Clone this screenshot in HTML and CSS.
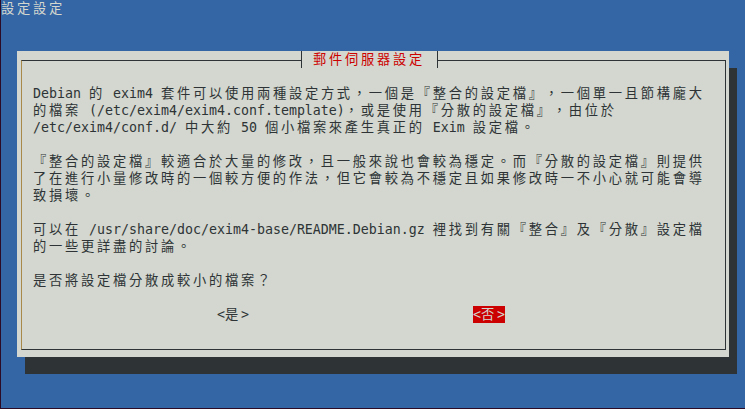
FILE: index.html
```html
<!DOCTYPE html>
<html lang="zh-TW">
<head>
<meta charset="utf-8">
<title>設定設定</title>
<link rel="stylesheet" href="styles.css">
</head>
<body>
<div class="term">
  <div class="backtitle"><span class="w">設定設定</span></div>
  <div class="dialog">
    <div class="top">
      <div class="seg seg-l"></div>
      <svg class="tee" width="8" height="17" viewBox="0 0 8 17"><path d="M0 9.5H4.5M4.5 0V17" stroke="#2e3436" stroke-width="1" fill="none"/></svg>
      <div class="title"> <span class="w">郵件伺服器設定</span> </div>
      <svg class="tee" width="8" height="17" viewBox="0 0 8 17"><path d="M4.5 9.5H8M4.5 0V17" stroke="#2e3436" stroke-width="1" fill="none"/></svg>
      <div class="seg seg-r"></div>
    </div>
    <div class="frame">
      <p class="para">
        <span class="ln">Debian <span class="w">的</span> exim4 <span class="w">套件可以使用兩種設定方式，一個是『整合的設定檔』，一個單一且節構龐大</span></span>
        <span class="ln"><span class="w">的檔案</span> (/etc/exim4/exim4.conf.template)<span class="w">，或是使用『分散的設定檔』，由位於</span></span>
        <span class="ln">/etc/exim4/conf.d/ <span class="w">中大約</span> 50 <span class="w">個小檔案來產生真正的</span> Exim <span class="w">設定檔。</span></span>
      </p>
      <p class="para">
        <span class="ln"><span class="w">『整合的設定檔』較適合於大量的修改，且一般來說也會較為穩定。而『分散的設定檔』則提供</span></span>
        <span class="ln"><span class="w">了在進行小量修改時的一個較方便的作法，但它會較為不穩定且如果修改時一不小心就可能會導</span></span>
        <span class="ln"><span class="w">致損壞。</span></span>
      </p>
      <p class="para">
        <span class="ln"><span class="w">可以在</span> /usr/share/doc/exim4-base/README.Debian.gz <span class="w">裡找到有關『整合』及『分散』設定檔</span></span>
        <span class="ln"><span class="w">的一些更詳盡的討論。</span></span>
      </p>
      <p class="para">
        <span class="ln"><span class="w">是否將設定檔分散成較小的檔案？</span></span>
      </p>
      <div class="btns">
        <span class="btn">&lt;<span class="w">是</span>&gt;</span>
        <span class="btn act">&lt;<span class="w">否</span>&gt;</span>
      </div>
    </div>
  </div>
</div>
</body>
</html>
```
FILE: styles.css
```css
html, body {
  margin: 0;
  padding: 0;
}
body {
  width: 745px;
  height: 409px;
  overflow: hidden;
  background: #3465a4;
}
.term {
  box-sizing: border-box;
  width: 745px;
  height: 409px;
  background: #3465a4;
  border-left: 1px solid #2c0b26;
  border-bottom: 1px solid #2c0b26;
  font-family: "DejaVu Sans Mono", "Noto Sans CJK TC", monospace;
  font-size: 13.29px;
  line-height: 17px;
  color: #2e3436;
  font-kerning: none;
  text-spacing-trim: space-all;
  text-autospace: no-autospace;
}
.w {
  font-family: "Noto Sans CJK TC", sans-serif;
  letter-spacing: 2.71px;
  line-height: 1;
}
.backtitle {
  height: 17px;
  color: #d3d7cf;
  white-space: pre;
}
.dialog {
  box-sizing: border-box;
  width: 712px;
  margin: 34px 0 0 16px;
  padding: 0 3px 7px 4px;
  background: #d3d7cf;
  box-shadow: 8px 17px 0 0 #2e3436;
}
.top {
  display: flex;
  height: 17px;
}
.seg {
  box-sizing: border-box;
  height: 8px;
  align-self: flex-end;
  border-top: 1px solid #2e3436;
}
.seg-l {
  width: 276px;
  border-left: 1px solid #a8894a;
}
.seg-r {
  flex: 1;
  border-right: 1px solid #2e3436;
}
.tee {
  display: block;
  flex: none;
}
.title {
  width: 128px;
  color: #cc0000;
  white-space: pre;
}
.frame {
  border: 1px solid #2e3436;
  border-top: 0;
  border-left-color: #a8894a;
  padding: 17px 0 26px 11px;
}
.para {
  margin: 0 0 17px 0;
}
.ln {
  display: block;
  height: 17px;
  white-space: pre;
}
.btns {
  display: flex;
  height: 17px;
  padding-left: 184px;
  gap: 224px;
}
.btn {
  display: block;
  height: 17px;
  white-space: pre;
}
.btn.act {
  background: #cc0000;
  color: #d3d7cf;
}
```
